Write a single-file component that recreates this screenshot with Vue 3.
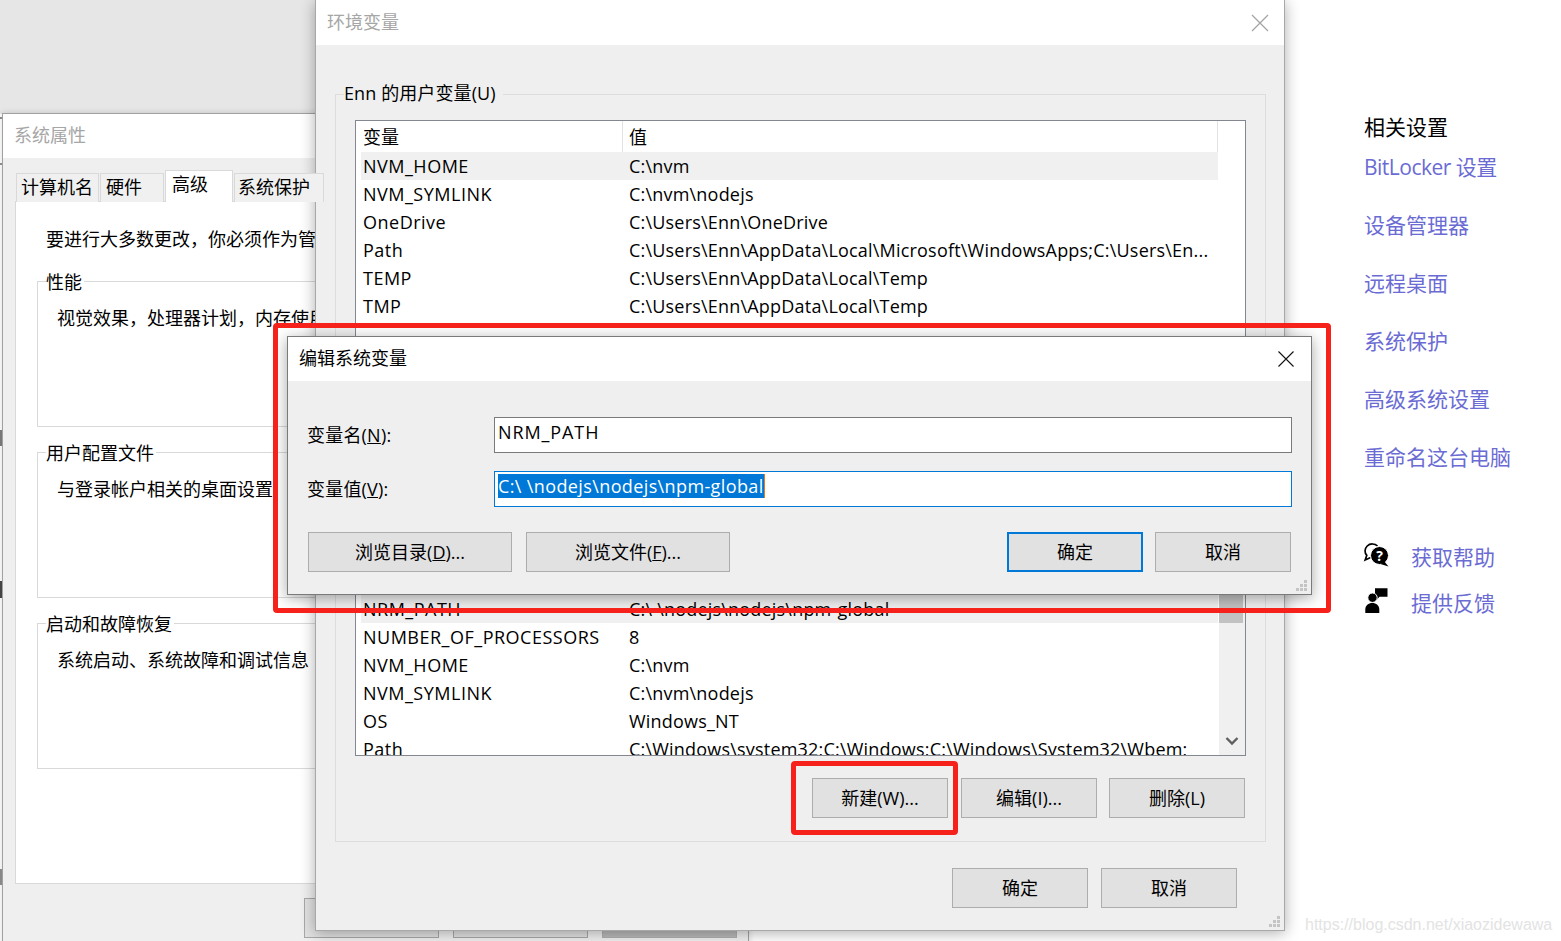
<script setup>
const userRows = [
  { name: 'NVM_HOME', value: 'C:\\nvm', active: true },
  { name: 'NVM_SYMLINK', value: 'C:\\nvm\\nodejs' },
  { name: 'OneDrive', value: 'C:\\Users\\Enn\\OneDrive' },
  { name: 'Path', value: 'C:\\Users\\Enn\\AppData\\Local\\Microsoft\\WindowsApps;C:\\Users\\En...' },
  { name: 'TEMP', value: 'C:\\Users\\Enn\\AppData\\Local\\Temp' },
  { name: 'TMP', value: 'C:\\Users\\Enn\\AppData\\Local\\Temp' }
]

const systemRows = [
  { name: 'NRM_PATH', value: 'C:\\ \\nodejs\\nodejs\\npm-global', active: true },
  { name: 'NUMBER_OF_PROCESSORS', value: '8' },
  { name: 'NVM_HOME', value: 'C:\\nvm' },
  { name: 'NVM_SYMLINK', value: 'C:\\nvm\\nodejs' },
  { name: 'OS', value: 'Windows_NT' },
  { name: 'Path', value: 'C:\\Windows\\system32;C:\\Windows;C:\\Windows\\System32\\Wbem;' }
]

const tabs = [
  { label: '计算机名', width: 83, pad: 4 },
  { label: '硬件', width: 64, pad: 5 },
  { label: '高级', width: 68, pad: 6, active: true },
  { label: '系统保护', width: 90, pad: 3 }
]

const groups = [
  { title: '性能', text: '视觉效果，处理器计划，内存使用，以及虚拟内存' },
  { title: '用户配置文件', text: '与登录帐户相关的桌面设置' },
  { title: '启动和故障恢复', text: '系统启动、系统故障和调试信息' }
]

const links = ['BitLocker 设置', '设备管理器', '远程桌面', '系统保护', '高级系统设置', '重命名这台电脑']

// slivers of another window at the very left edge of the capture
const edgeMarks = [
  { top: 117, height: 2, color: '#8a8a8a' },
  { top: 163, height: 2, color: '#8a8a8a' },
  { top: 430, height: 16, color: '#777' },
  { top: 581, height: 17, color: '#444' },
  { top: 869, height: 16, color: '#888' }
]
</script>

<template>
  <div class="desktop">
    <div class="backdrop"></div>

    <!-- 系统属性, mostly covered -->
    <div class="window sys-window">
      <div class="titlebar titlebar-sys dim">系统属性</div>
      <div class="tabs">
        <div
          v-for="tab in tabs"
          :key="tab.label"
          class="tab"
          :class="{ 'tab-active': tab.active }"
          :style="{ width: tab.width + 'px', paddingLeft: tab.pad + 'px' }"
        >{{ tab.label }}</div>
      </div>
      <div class="sys-panel">
        <div class="sys-intro">要进行大多数更改，你必须作为管理员登录才能进行这些更改。</div>
        <div v-for="group in groups" :key="group.title" class="sys-group">
          <span class="sys-legend">{{ group.title }}</span>
          <div class="sys-group-text">{{ group.text }}</div>
        </div>
      </div>
      <div class="sys-footer">
        <div class="btn sys-btn"></div>
        <div class="btn sys-btn"></div>
        <div class="btn sys-btn sys-btn-dark"></div>
      </div>
    </div>

    <div
      v-for="mark in edgeMarks"
      :key="mark.top"
      class="edge-mark"
      :style="{ top: mark.top + 'px', height: mark.height + 'px', background: mark.color }"
    ></div>

    <!-- 环境变量 -->
    <div class="window env-window">
      <div class="titlebar titlebar-env dim">
        环境变量
        <svg class="close" width="18" height="18" viewBox="0 0 18 18">
          <path d="M1 1 17 17M17 1 1 17" stroke="#a3a3a3" stroke-width="1.2" fill="none" />
        </svg>
      </div>
      <div class="env-body">
        <div class="env-group">
          <span class="env-legend">Enn 的用户变量(U)</span>
          <div class="list list-user">
            <div class="list-head">
              <span class="cell-name">变量</span>
              <span class="cell-value">值</span>
            </div>
            <div v-for="row in userRows" :key="row.name" class="row" :class="{ 'row-active': row.active }">
              <span class="cell-name">{{ row.name }}</span>
              <span class="cell-value">{{ row.value }}</span>
            </div>
          </div>
          <div class="list list-system">
            <div v-for="row in systemRows" :key="row.name" class="row" :class="{ 'row-active': row.active }">
              <span class="cell-name">{{ row.name }}</span>
              <span class="cell-value">{{ row.value }}</span>
            </div>
            <div class="scrollbar">
              <div class="scroll-thumb"></div>
              <svg class="scroll-arrow" width="14" height="10" viewBox="0 0 14 10">
                <path d="M1.5 2 7 7.5 12.5 2" stroke="#5f5f5f" stroke-width="2.4" fill="none" />
              </svg>
            </div>
          </div>
          <div class="list-actions">
            <div class="btn">新建(W)...</div>
            <div class="btn">编辑(I)...</div>
            <div class="btn">删除(L)</div>
          </div>
        </div>
        <div class="env-footer">
          <div class="btn">确定</div>
          <div class="btn">取消</div>
        </div>
      </div>
      <svg class="grip" width="12" height="12" viewBox="0 0 12 12">
        <path d="M8 0h3v3H8zM4 4h3v3H4zM8 4h3v3H8zM0 8h3v3H0zM4 8h3v3H4zM8 8h3v3H8z" fill="#c4c4c4" />
      </svg>
    </div>

    <!-- 编辑系统变量 -->
    <div class="window edit-dialog">
      <div class="titlebar titlebar-edit">
        编辑系统变量
        <svg class="close" width="16" height="16" viewBox="0 0 16 16">
          <path d="M.5.5 15.5 15.5M15.5.5.5 15.5" stroke="#111" stroke-width="1.1" fill="none" />
        </svg>
      </div>
      <div class="edit-body">
        <div class="field">
          <label class="field-label">变量名(<u>N</u>):</label>
          <div class="field-input">NRM_PATH</div>
        </div>
        <div class="field">
          <label class="field-label">变量值(<u>V</u>):</label>
          <div class="field-input field-input-focus"><span class="selected">C:\ \nodejs\nodejs\npm-global</span></div>
        </div>
        <div class="edit-actions">
          <div class="btn btn-browse">浏览目录(<u>D</u>)...</div>
          <div class="btn btn-browse">浏览文件(<u>F</u>)...</div>
          <div class="spacer"></div>
          <div class="btn btn-default">确定</div>
          <div class="btn">取消</div>
        </div>
      </div>
      <svg class="grip" width="12" height="12" viewBox="0 0 12 12">
        <path d="M8 0h3v3H8zM4 4h3v3H4zM8 4h3v3H8zM0 8h3v3H0zM4 8h3v3H4zM8 8h3v3H8z" fill="#c4c4c4" />
      </svg>
    </div>

    <!-- 设置 sidebar -->
    <aside class="related">
      <h2 class="related-title">相关设置</h2>
      <a
        v-for="(link, i) in links"
        :key="link"
        class="related-link"
        :class="{ 'related-link-latin': i === 0 }"
      >{{ link }}</a>
      <div class="support">
        <div class="support-item">
          <svg width="26" height="26" viewBox="0 1 26 26">
            <path d="M13.500 3C11 .4 6 .2 3.200 3 .4 5.800 .4 9.800 2.800 12.300L1.200 17 6.600 14.500" fill="none" stroke="#000" stroke-width="1.700" />
            <circle cx="15.500" cy="12.500" r="9" fill="#000" stroke="#fff" stroke-width="1" />
            <path d="M20 18 24.500 23.500 16.500 21Z" fill="#000" />
            <text x="15.500" y="17.500" text-anchor="middle" class="help-mark">?</text>
          </svg>
          <a class="related-link support-link">获取帮助</a>
        </div>
        <div class="support-item">
          <svg width="26" height="26" viewBox="0 5 26 26">
            <path d="M11 3.300H23.500V11.700H15.500L12.500 15V11.700H11Z" fill="#000" />
            <circle cx="8.500" cy="12.700" r="4.700" fill="#000" stroke="#fff" stroke-width="1" />
            <path d="M1.300 28V24.500C1.300 20.600 4.400 18 8.300 18 12.200 18 15.300 20.600 15.300 24.500V28Z" fill="#000" />
          </svg>
          <a class="related-link support-link">提供反馈</a>
        </div>
      </div>
    </aside>

    <div class="watermark">https://blog.csdn.net/xiaozidewawa</div>

    <!-- red annotations -->
    <div class="callout callout-dialog"></div>
    <div class="callout callout-new"></div>
  </div>
</template>

<style scoped>
.desktop {
  position: relative;
  width: 1561px;
  height: 941px;
  overflow: hidden;
  background: #fff;
  color: #000;
  font-family: "Open Sans", "Noto Sans CJK SC", sans-serif;
  font-size: 18px;
}

.backdrop {
  position: absolute;
  left: 0;
  top: 0;
  width: 316px;
  height: 114px;
  background: #e6e6e6;
}

.edge-mark {
  position: absolute;
  left: 0;
  width: 2px;
}

.window {
  position: absolute;
  box-sizing: border-box;
  background: #efefef;
  display: flex;
  flex-direction: column;
}

.titlebar {
  position: relative;
  flex: none;
  background: #fff;
  display: flex;
  align-items: center;
  box-sizing: border-box;
  padding-bottom: 3px;
}

.dim {
  color: #a6a6a6;
}

.close {
  position: absolute;
}

.btn {
  box-sizing: border-box;
  flex: none;
  width: 136px;
  height: 40px;
  background: #e1e1e1;
  border: 1px solid #adadad;
  display: flex;
  align-items: center;
  justify-content: center;
  line-height: 1;
}

.grip {
  position: absolute;
  right: 3px;
  bottom: 2px;
}

/* system properties */
.sys-window {
  left: 2px;
  top: 113px;
  width: 747px;
  height: 840px;
  border: 1px solid #a0a0a0;
  box-shadow: 0 0 6px rgba(0, 0, 0, 0.15);
}

.titlebar-sys {
  height: 44px;
  padding-left: 11px;
  padding-bottom: 4px;
}

.tabs {
  display: flex;
  align-items: flex-end;
  height: 44px;
  margin-left: 13px;
  position: relative;
  z-index: 1;
  margin-bottom: -1px;
}

.tab {
  box-sizing: border-box;
  height: 29px;
  margin-right: 1px;
  background: #f0f0f0;
  border: 1px solid #d9d9d9;
  border-bottom: none;
  line-height: 27px;
  white-space: nowrap;
}

.tab-active {
  height: 32px;
  background: #fff;
  line-height: 27px;
}

.sys-panel {
  box-sizing: border-box;
  height: 683px;
  margin: 0 12px;
  padding: 25px 21px 0;
  background: #fff;
  border: 1px solid #d9d9d9;
}

.sys-intro {
  padding-left: 9px;
  line-height: 24px;
  margin-bottom: 30px;
  white-space: nowrap;
}

.sys-group {
  position: relative;
  box-sizing: border-box;
  height: 146px;
  margin-bottom: 25px;
  border: 1px solid #d9d9d9;
  padding: 24px 0 0 19px;
}

.sys-legend {
  position: absolute;
  left: 8px;
  top: -12px;
  padding-right: 2px;
  line-height: 24px;
  background: #fff;
}

.sys-group-text {
  line-height: 24px;
  white-space: nowrap;
}

.sys-footer {
  display: flex;
  gap: 14px;
  margin: 14px 0 0 301px;
}

.sys-btn {
  border-color: #a8a8a8;
  width: 135px;
}

.sys-btn-dark {
  background: #b9b9b9;
  border-color: #b0b0b0;
}

/* environment variables */
.env-window {
  left: 315px;
  top: 0;
  width: 970px;
  height: 931px;
  border: 1px solid #a8a8a8;
  border-top: none;
  box-shadow: 0 2px 14px rgba(0, 0, 0, 0.32);
}

.titlebar-env {
  height: 45px;
  padding-left: 11px;
}

.titlebar-env .close {
  right: 15px;
  top: 14px;
}

.env-body {
  padding: 49px 18px 0 19px;
}

.env-group {
  position: relative;
  box-sizing: border-box;
  width: 931px;
  height: 748px;
  padding: 25px 19px 0;
  border: 1px solid #dcdcdc;
}

.env-legend {
  position: absolute;
  left: 8px;
  top: -14px;
  padding-right: 7px;
  line-height: 24px;
  background: #efefef;
  white-space: nowrap;
  letter-spacing: 0.1px;
}

.list {
  position: relative;
  box-sizing: border-box;
  width: 891px;
  background: #fff;
  border: 1px solid #828790;
  overflow: hidden;
}

.list-user {
  height: 220px;
}

.list-system {
  height: 416px;
  padding-top: 255px;
  border-top: none;
}

.list-head {
  display: flex;
  height: 31px;
  line-height: 32px;
  padding-left: 7px;
  width: 855px;
}

.list-head .cell-value {
  border-left: 1px solid #e3e3e3;
  border-right: 1px solid #e3e3e3;
  padding-left: 6px;
  margin-left: -7px;
  flex: 1;
  height: 31px;
}

.row {
  display: flex;
  height: 28px;
  line-height: 28px;
  margin-left: 5px;
  width: 857px;
  padding-left: 2px;
  box-sizing: border-box;
  white-space: nowrap;
}

.row-active {
  background: #f0f0f0;
}

.row .cell-name {
  letter-spacing: 0.5px;
}

.row .cell-value {
  letter-spacing: 0.2px;
}

.cell-name {
  flex: none;
  width: 266px;
}

.cell-value {
  flex: 1;
  min-width: 0;
}

.scrollbar {
  position: absolute;
  right: 0;
  top: 0;
  bottom: 0;
  width: 26px;
  background: #f0f0f0;
}

.scroll-thumb {
  margin-top: 255px;
  width: 24px;
  height: 28px;
  background: #c2c2c2;
}

.scroll-arrow {
  position: absolute;
  left: 6px;
  bottom: 9px;
}

.list-actions {
  display: flex;
  gap: 13px;
  margin-top: 22px;
  justify-content: flex-end;
  width: 890px;
}

.list-actions .btn:last-child {
  margin-left: -1px;
}

.env-footer {
  display: flex;
  gap: 13px;
  justify-content: flex-end;
  margin: 26px 29px 0 0;
}

/* edit dialog */
.edit-dialog {
  left: 287px;
  top: 336px;
  width: 1025px;
  height: 259px;
  border: 1px solid #7a7a7a;
  box-shadow: 0 3px 14px rgba(0, 0, 0, 0.35);
}

.titlebar-edit {
  height: 44px;
  padding-left: 11px;
  padding-bottom: 4px;
}

.titlebar-edit .close {
  right: 17px;
  top: 14px;
}

.edit-body {
  padding: 36px 19px 0 20px;
}

.field {
  display: flex;
  align-items: center;
  height: 36px;
  margin-bottom: 18px;
}

.field-label {
  flex: none;
  width: 187px;
  margin-left: -1px;
  padding-bottom: 2px;
  letter-spacing: 0.2px;
}

.field-input {
  box-sizing: border-box;
  width: 798px;
  height: 36px;
  padding-left: 3px;
  line-height: 28px;
  background: #fff;
  border: 1px solid #7a7a7a;
  letter-spacing: 0.9px;
}

.field-input-focus {
  border-color: #0078d7;
  padding-left: 3px;
  padding-top: 2px;
  line-height: 24px;
  letter-spacing: 0.38px;
}

.selected {
  display: inline-block;
  background: #0078d7;
  color: #fff;
  border-right: 1px solid #e8781e;
  white-space: nowrap;
}

.edit-actions {
  display: flex;
  gap: 12px;
  margin-top: 25px;
  padding-right: 1px;
}

.btn-browse {
  width: 204px;
  margin-right: 2px;
}

.spacer {
  flex: 1;
}

.btn-default {
  border: 2px solid #0078d7;
}

/* right hand settings column */
.related {
  position: absolute;
  left: 1364px;
  top: 113px;
  font-size: 21px;
  display: flex;
  flex-direction: column;
  white-space: nowrap;
}

.related-title {
  margin: 0;
  font-size: 21px;
  font-weight: 400;
  line-height: 28px;
  margin-bottom: 12px;
}

.related-link {
  display: block;
  color: #6b6bd4;
  line-height: 28px;
  margin-bottom: 30px;
}

.related-link-latin {
  letter-spacing: -0.5px;
}

.support {
  display: flex;
  flex-direction: column;
  gap: 20px;
  margin-top: 43px;
}

.support-item {
  display: flex;
  align-items: center;
  gap: 21px;
  height: 26px;
}

.support-item svg {
  overflow: visible;
}

.support-link {
  margin: 0;
}

.help-mark {
  fill: #fff;
  font-size: 14px;
  font-weight: 700;
}

.watermark {
  position: absolute;
  left: 1305px;
  top: 914px;
  font-family: "Liberation Sans", sans-serif;
  font-size: 16px;
  line-height: 22px;
  color: #e3e3e3;
  white-space: nowrap;
}

.callout {
  position: absolute;
  box-sizing: border-box;
  border: 5px solid #f5211a;
  border-radius: 4px;
  pointer-events: none;
}

.callout-dialog {
  left: 273px;
  top: 323px;
  width: 1058px;
  height: 290px;
}

.callout-new {
  left: 791px;
  top: 761px;
  width: 167px;
  height: 74px;
}
</style>
